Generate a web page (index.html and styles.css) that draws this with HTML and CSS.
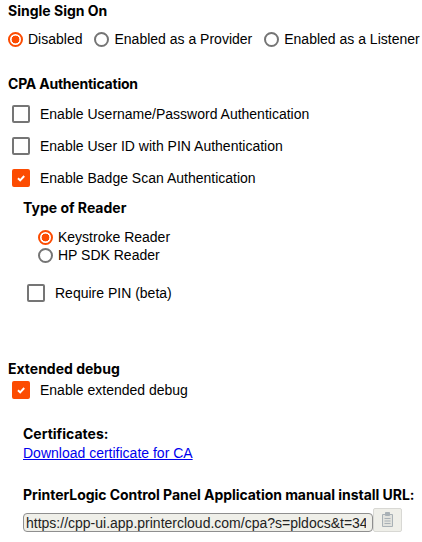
FILE: index.html
```html
<!DOCTYPE html>
<html lang="en">
<head>
  <meta charset="UTF-8">
  <meta name="viewport" content="width=device-width, initial-scale=1.0">
  <title>Printer settings</title>
  <link rel="stylesheet" href="styles.css">
</head>
<body>

  <!-- Single sign on -->
  <section class="sso">
    <h3 class="heading">Single Sign On</h3>
    <div class="radio-row">
      <label class="radio"><input type="radio" name="sso" checked><span>Disabled</span></label>
      <label class="radio"><input type="radio" name="sso"><span>Enabled as a Provider</span></label>
      <label class="radio"><input type="radio" name="sso"><span>Enabled as a Listener</span></label>
    </div>
  </section>

  <!-- CPA authentication -->
  <section class="cpa">
    <h3 class="heading heading-cpa">CPA Authentication</h3>
    <label class="check"><input type="checkbox"><span>Enable Username/Password Authentication</span></label>
    <label class="check"><input type="checkbox"><span>Enable User ID with PIN Authentication</span></label>
    <label class="check"><input type="checkbox" checked><span>Enable Badge Scan Authentication</span></label>

    <div class="reader">
      <h3 class="heading">Type of Reader</h3>
      <div class="radio-stack">
        <label class="radio"><input type="radio" name="reader" checked><span>Keystroke Reader</span></label>
        <label class="radio"><input type="radio" name="reader"><span>HP SDK Reader</span></label>
      </div>
      <label class="check check-pin"><input type="checkbox"><span>Require PIN (beta)</span></label>
    </div>
  </section>

  <!-- Extended debug -->
  <section class="debug">
    <h3 class="heading">Extended debug</h3>
    <label class="check"><input type="checkbox" checked><span>Enable extended debug</span></label>
  </section>

  <section class="certs">
    <h3 class="heading">Certificates:</h3>
    <a href="#">Download certificate for CA</a>
  </section>

  <section class="install">
    <h3 class="heading heading-install">PrinterLogic Control Panel Application manual install URL:</h3>
    <div class="url-row">
      <input class="url" type="text" readonly value="https://cpp-ui.app.printercloud.com/cpa?s=pldocs&t=349f0c2a">
      <button class="copy" type="button" aria-label="Copy">
        <svg width="13" height="17" viewBox="0 0 13 17">
          <path d="M1.5 3.5h10v12h-10z" fill="#e2e3de" stroke="#a9b1b6"/>
          <path d="M4.5 1.5h4v3h-4z" fill="#a9b1b6" stroke="#a9b1b6"/>
          <path d="M3.5 7.5h6M3.5 10h6M3.5 12.5h6" stroke="#a9b1b6" fill="none"/>
        </svg>
      </button>
    </div>
  </section>

</body>
</html>
```
FILE: styles.css
```css
/* Page */
body {
  margin: 0;
  padding: 1px 0 0 8px;
  height: 541px;
  overflow: hidden;
  background-color: #fff;
  color: #000;
  font-family: "Liberation Sans", Arial, sans-serif;
  font-size: 14px;
}

/* Section titles */
.heading {
  margin: 0;
  font-family: "Inter", "Liberation Sans", sans-serif;
  font-size: 14px;
  font-weight: 700;
  line-height: 20px;
  white-space: nowrap;
}

.heading-cpa {
  letter-spacing: -0.22px;
}

.heading-install {
  letter-spacing: -0.05px;
}

/* Radios */
.radio-row {
  display: flex;
  gap: 12px;
  margin-top: 9px;
}

.radio {
  display: flex;
  align-items: center;
  height: 18px;
  white-space: nowrap;
}

.radio input {
  appearance: none;
  box-sizing: border-box;
  flex: none;
  width: 15px;
  height: 15px;
  margin: 0 5px 0 0;
  border: 2px solid #757575;
  border-radius: 50%;
  background-color: #fff;
}

.radio input:checked {
  border-color: #fc4c02;
  background: radial-gradient(circle, #fc4c02 0 3.6px, #fff 4.2px);
}

/* Checkboxes */
.check {
  display: flex;
  align-items: center;
  height: 32px;
  padding-left: 4px;
}

.check input {
  appearance: none;
  box-sizing: border-box;
  flex: none;
  width: 18px;
  height: 18px;
  margin: 0 10px 0 0;
  border: 2px solid #757575;
  border-radius: 2px;
  background-color: #fff;
}

.check input:checked {
  border-color: #fc4c02;
  background-color: #fc4c02;
  background-image: url("data:image/svg+xml,%3Csvg xmlns='http://www.w3.org/2000/svg' viewBox='0 0 14 14'%3E%3Cpath d='M4 7.2l2.2 2.2L10.2 5' fill='none' stroke='%23fff' stroke-width='2'/%3E%3C/svg%3E");
}

/* CPA block */
.cpa {
  margin-top: 26px;
}

.cpa .heading + .check {
  margin-top: 4px;
}

.reader {
  margin-top: 4px;
  padding-left: 15px;
}

.radio-stack {
  margin-top: 10px;
  padding-left: 15px;
}

.check-pin {
  margin-top: 13px;
}

/* Extended debug */
.debug {
  margin-top: 50px;
}

.debug .check {
  margin-top: -5px;
}

/* Certificates */
.certs {
  margin-top: 18px;
  padding-left: 15px;
}

.certs a {
  display: block;
  color: #0000ee;
  line-height: 18px;
}

/* Manual install URL */
.install {
  margin-top: 23px;
  padding-left: 15px;
}

.url-row {
  display: flex;
  align-items: flex-end;
  margin-top: 3px;
}

.url {
  box-sizing: border-box;
  width: 350px;
  height: 19px;
  padding: 0 6px 0 2px;
  border: 1px solid #8f8f8f;
  border-radius: 4px;
  background-color: #efefe9;
  color: #222;
  font-family: "Liberation Sans", Arial, sans-serif;
  font-size: 14px;
}

.copy {
  display: flex;
  align-items: flex-start;
  justify-content: center;
  width: 29px;
  height: 24px;
  padding: 2px 0 0;
  border: 1px solid #d8d8d4;
  border-radius: 2px;
  background-color: #efefe9;
}
```
